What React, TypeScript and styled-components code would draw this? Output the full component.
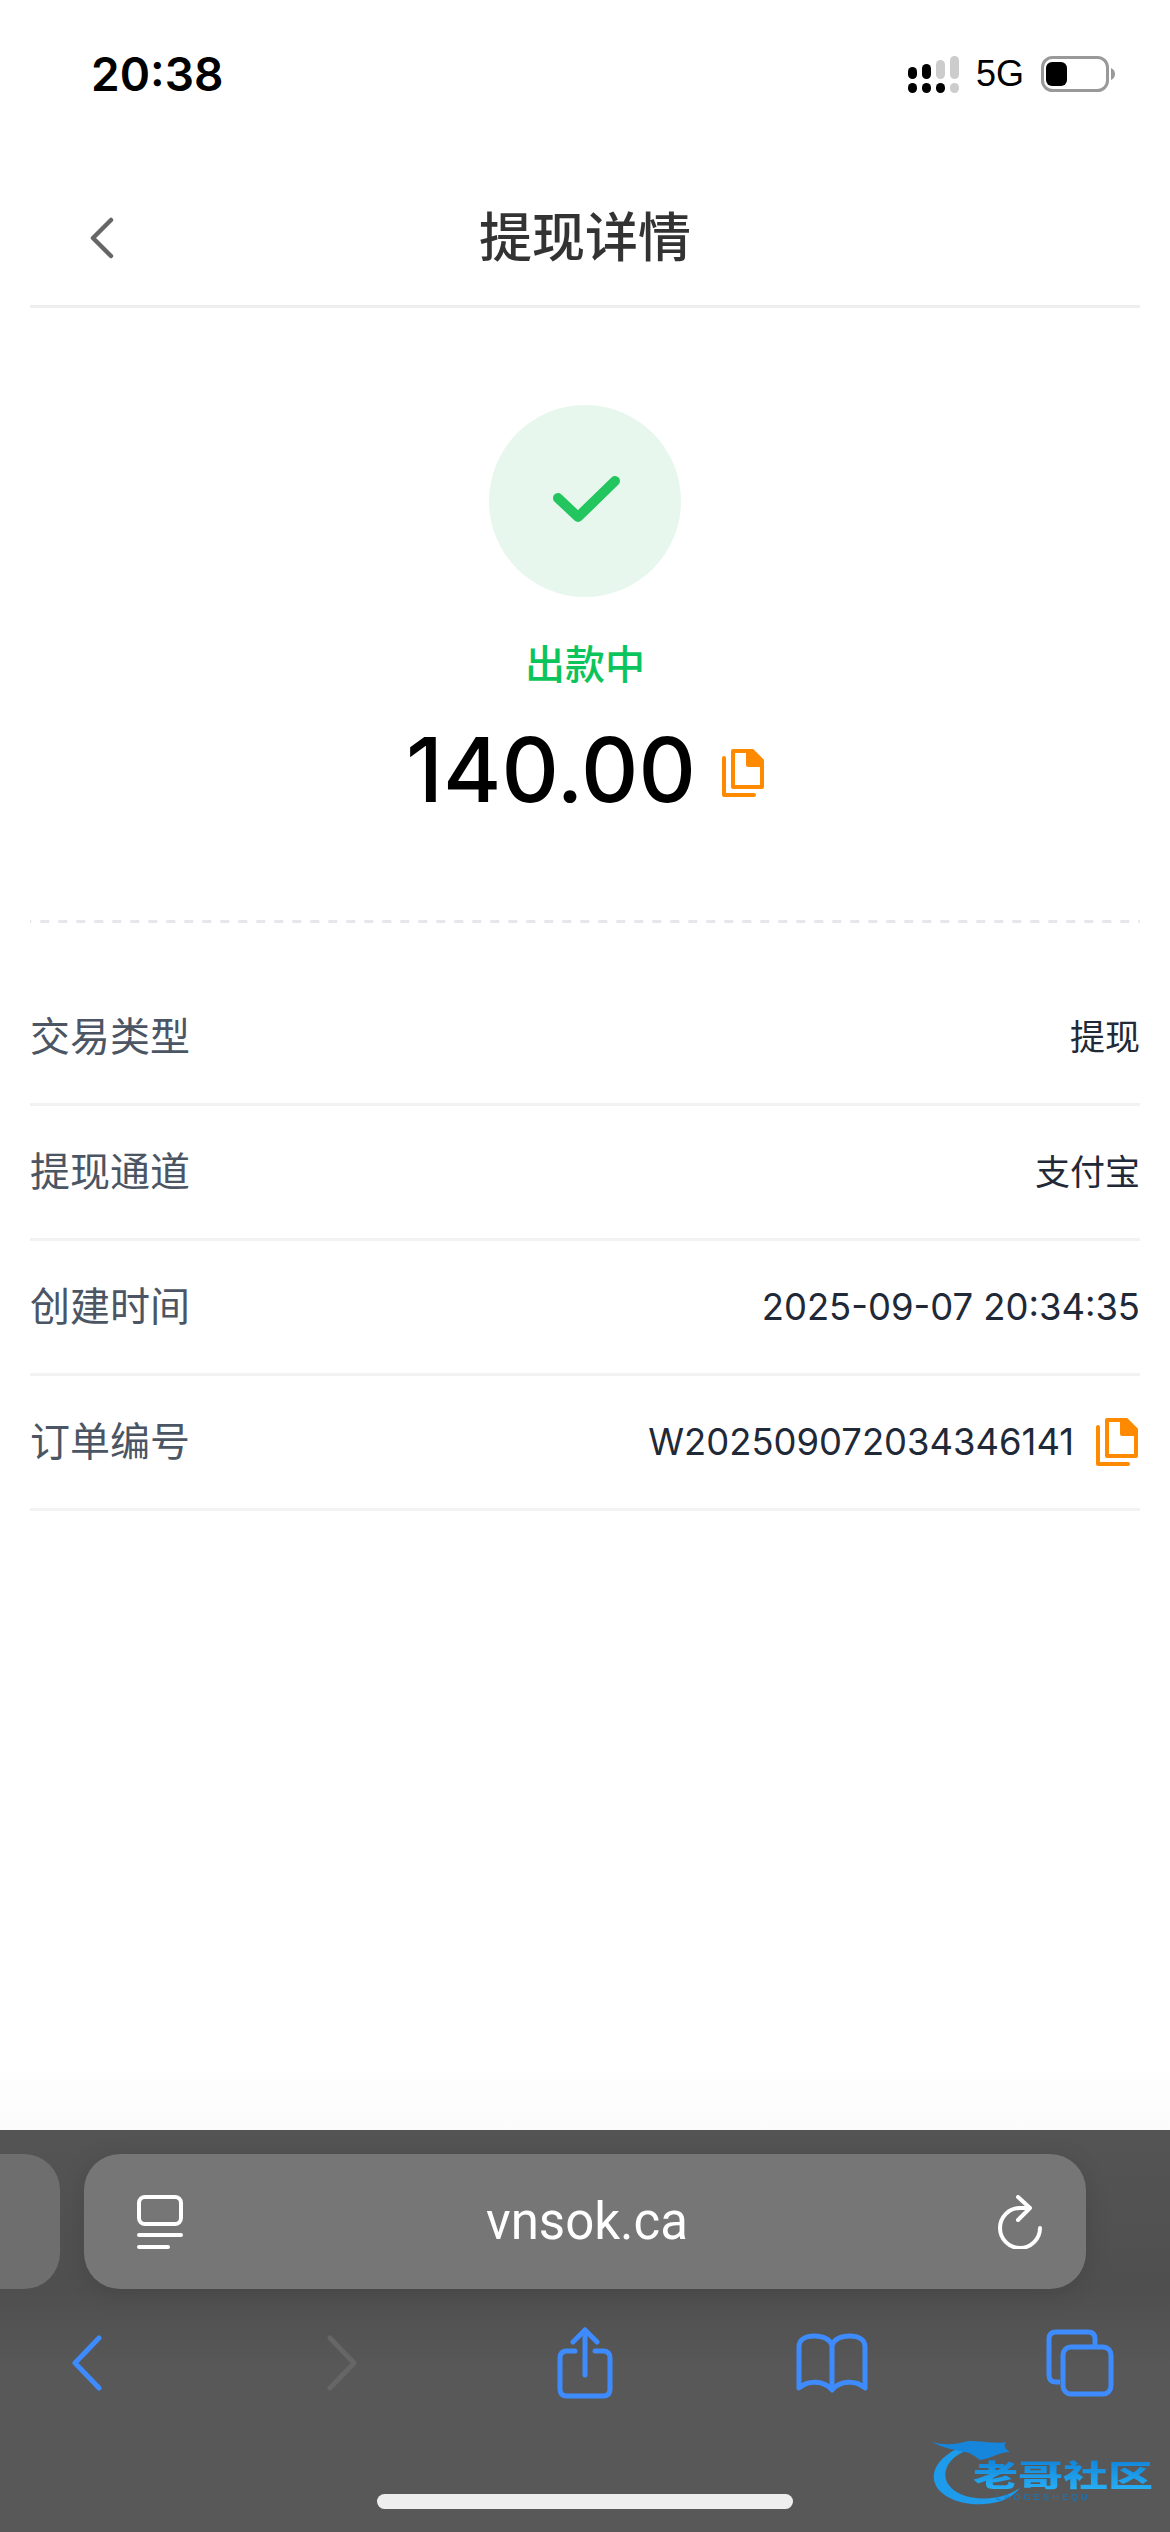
import React from "react";
import styled, { createGlobalStyle } from "styled-components";

const CJK = `Inter, "Noto Sans CJK SC", sans-serif`;

const GlobalStyle = createGlobalStyle`
  html, body {
    margin: 0;
    padding: 0;
    background: #fff;
  }
  * {
    box-sizing: border-box;
  }
`;

const Screen = styled.div`
  position: relative;
  width: 1170px;
  height: 2532px;
  display: flex;
  flex-direction: column;
  overflow: hidden;
  font-family: ${CJK};
  background: #fff;
`;

const StatusBar = styled.div`
  height: 148px;
  flex: none;
  display: flex;
  justify-content: space-between;
  padding: 50px 55px 0 91px;
`;

const Clock = styled.div`
  font: 600 46px/48px Inter, sans-serif;
  color: #000;
`;

const StatusIcons = styled.div`
  height: 48px;
  display: flex;
  align-items: center;
  gap: 17px;
`;

const NetworkLabel = styled.span`
  font: 400 36px/48px "Liberation Sans", sans-serif;
  color: #000;
`;

const Header = styled.header`
  position: relative;
  height: 160px;
  flex: none;
  margin: 0 30px;
  display: flex;
  align-items: center;
  justify-content: center;
  border-bottom: 3px solid #eeeeee;
`;

const BackButton = styled.div`
  position: absolute;
  left: 60px;
  top: 69px;
  display: flex;
`;

const Title = styled.h1`
  margin: 14px 0 0;
  font: 500 53px/64px "Noto Sans CJK SC", sans-serif;
  color: #333;
`;

const Main = styled.main`
  flex: 1;
  padding: 0 30px;
  background: linear-gradient(#fff 96%, #fbfbfb);
`;

const Hero = styled.section`
  height: 615px;
  padding-top: 97px;
  display: flex;
  flex-direction: column;
  align-items: center;
  background: linear-gradient(90deg, #e5e7eb 9px, transparent 9px) 10.3px 100% / 18px 3px repeat-x;
`;

const StatusCircle = styled.div`
  width: 192px;
  height: 192px;
  border-radius: 50%;
  background: #e8f7ee;
  display: flex;
  align-items: center;
  justify-content: center;
`;

const CheckMark = styled.svg`
  margin-left: 3px;
`;

const StatusText = styled.div`
  margin-top: 41px;
  font: 500 40px/48px "Noto Sans CJK SC", sans-serif;
  color: #0cc45c;
`;

const AmountRow = styled.div`
  margin-top: 30px;
  display: flex;
  align-items: center;
  gap: 26px;
`;

const Amount = styled.div`
  font: 500 89px/108px Inter, sans-serif;
  color: #000;
`;

const CopyButton = styled.div<{ $nudge?: number }>`
  display: flex;
  margin-top: ${(p) => p.$nudge ?? 0}px;
`;

const InfoList = styled.section`
  padding-top: 48px;
`;

const InfoRow = styled.div`
  height: 135px;
  display: flex;
  align-items: center;
  justify-content: space-between;
  border-bottom: 3px solid #f2f2f2;
`;

const Label = styled.span`
  font: 400 40px/48px ${CJK};
  color: #4b5563;
`;

const ValueGroup = styled.div`
  display: flex;
  align-items: center;
  gap: 22px;
  margin-right: 2px;
`;

const Value = styled.span<{ $numeric?: boolean }>`
  font: 400 ${(p) => (p.$numeric ? "36.4px" : "35px")}/48px ${CJK};
  color: #1f2937;
`;

const Toolbar = styled.footer`
  height: 402px;
  flex: none;
  padding-top: 24px;
  background: linear-gradient(#545454, #4f4f4f 40%, #585858 60%);
`;

const TabRow = styled.div`
  display: flex;
  gap: 24px;
  height: 135px;
`;

const TabStub = styled.div`
  width: 60px;
  border-radius: 0 36px 36px 0;
  background: #6e6e6e;
`;

const AddressBar = styled.div`
  width: 1002px;
  padding: 0 43px 0 53px;
  border-radius: 36px;
  background: #767676;
  box-shadow: 0 4px 24px rgba(0, 0, 0, 0.12);
  display: flex;
  align-items: center;
  justify-content: space-between;
`;

const Url = styled.span`
  font: 400 51px/60px Roboto, sans-serif;
  color: #fff;
  margin-right: 6px;
`;

const NavRow = styled.div`
  height: 72px;
  margin-top: 38px;
  padding: 0 40px 0 37px;
  display: flex;
  align-items: center;
  justify-content: space-between;
`;

const NavButton = styled.div<{ $inset?: number }>`
  width: 100px;
  padding-left: ${(p) => p.$inset ?? 0}px;
  display: flex;
  justify-content: center;
`;

const HomeBar = styled.div`
  width: 416px;
  height: 15px;
  margin: 95px auto 0;
  border-radius: 8px;
  background: #eeeeee;
`;

const Watermark = styled.div`
  position: absolute;
  left: 932px;
  top: 2438px;
  width: 222px;
  height: 68px;
  filter: blur(0.7px);
`;

const WatermarkArc = styled.svg`
  position: absolute;
  left: 0;
  top: 0;
`;

const WatermarkTitle = styled.div`
  position: absolute;
  left: 41px;
  top: 10px;
  font: 900 45px/50px "Noto Sans CJK SC", sans-serif;
  white-space: nowrap;
  transform: scaleY(0.66);
  background: linear-gradient(#0f7fd6, #27aef5);
  -webkit-background-clip: text;
  background-clip: text;
  color: transparent;
`;

const WatermarkSub = styled.div`
  position: absolute;
  left: 64px;
  top: 54px;
  font: 400 9px/10px "Liberation Sans", sans-serif;
  letter-spacing: 3.2px;
  color: #1278c4;
`;

function SignalIcon() {
  return (
    <svg width="51" height="37" viewBox="0 0 51 37">
      <g fill="#000">
        <rect x="0" y="11" width="9" height="12" rx="4.5" />
        <rect x="14" y="8" width="9" height="15" rx="4.5" />
        <rect x="0" y="27" width="9" height="10" rx="4.5" />
        <rect x="14" y="27" width="9" height="10" rx="4.5" />
        <rect x="28" y="27" width="9" height="10" rx="4.5" />
      </g>
      <g fill="#cccccc">
        <rect x="28" y="4" width="9" height="19" rx="4.5" />
        <rect x="42" y="0" width="9" height="23" rx="4.5" />
        <rect x="42" y="27" width="9" height="10" rx="4.5" />
      </g>
    </svg>
  );
}

function BatteryIcon() {
  return (
    <svg width="74" height="36" viewBox="0 0 74 36">
      <rect x="1.5" y="1.5" width="65" height="33" rx="10" fill="none" stroke="#999" strokeWidth="3" />
      <rect x="5" y="6" width="21" height="24" rx="6" fill="#000" />
      <path d="M70 12 q4 2 4 6 t-4 6z" fill="#999" />
    </svg>
  );
}

function CopyIcon() {
  return (
    <svg width="42" height="48" viewBox="0 0 42 48" fill="none">
      <path d="M2 9V46H32" stroke="#ff8a00" strokeWidth="4" strokeLinecap="round" strokeLinejoin="round" />
      <path d="M11 2H30L40 12V38H11Z" stroke="#ff8a00" strokeWidth="4" strokeLinejoin="round" />
      <path d="M24 0H31L42 11V18H26Q24 18 24 16Z" fill="#ff8a00" />
    </svg>
  );
}

function PageIcon() {
  return (
    <svg width="46" height="54" viewBox="0 0 46 54" fill="none" stroke="#fff" strokeWidth="4" strokeLinecap="round">
      <rect x="2" y="2" width="42" height="27" rx="6" />
      <path d="M2 40H44" />
      <path d="M2 52H31" />
    </svg>
  );
}

function ReloadIcon() {
  return (
    <svg width="46" height="54" viewBox="0 0 46 54" fill="none" stroke="#fff" strokeWidth="4" strokeLinecap="round" strokeLinejoin="round">
      <path d="M43 33A20 20 0 1 1 23 13H32" />
      <path d="M21 2L33 13L21 25" />
    </svg>
  );
}

const BLUE = "#3d8bfd";

export default function App() {
  return (
    <>
      <GlobalStyle />
      <Screen lang="zh-CN">
        <StatusBar>
          <Clock>20:38</Clock>
          <StatusIcons>
            <SignalIcon />
            <NetworkLabel>5G</NetworkLabel>
            <BatteryIcon />
          </StatusIcons>
        </StatusBar>
        <Header>
          <BackButton>
            <svg width="24" height="42" viewBox="0 0 24 42" fill="none" stroke="#666" strokeWidth="4.5" strokeLinecap="round" strokeLinejoin="round">
              <path d="M21 3L3 21L21 39" />
            </svg>
          </BackButton>
          <Title>提现详情</Title>
        </Header>
        <Main>
          <Hero>
            <StatusCircle>
              <CheckMark width="70" height="50" viewBox="0 0 70 50" fill="none" stroke="#23c55e" strokeWidth="10" strokeLinecap="round" strokeLinejoin="round">
                <path d="M6 22L26 41L63 5" />
              </CheckMark>
            </StatusCircle>
            <StatusText>出款中</StatusText>
            <AmountRow>
              <Amount>140.00</Amount>
              <CopyButton $nudge={6}>
                <CopyIcon />
              </CopyButton>
            </AmountRow>
          </Hero>
          <InfoList>
            <InfoRow>
              <Label>交易类型</Label>
              <Value>提现</Value>
            </InfoRow>
            <InfoRow>
              <Label>提现通道</Label>
              <Value>支付宝</Value>
            </InfoRow>
            <InfoRow>
              <Label>创建时间</Label>
              <Value $numeric>2025-09-07 20:34:35</Value>
            </InfoRow>
            <InfoRow>
              <Label>订单编号</Label>
              <ValueGroup>
                <Value $numeric>W202509072034346141</Value>
                <CopyButton>
                  <CopyIcon />
                </CopyButton>
              </ValueGroup>
            </InfoRow>
          </InfoList>
        </Main>
        <Toolbar>
          <TabRow>
            <TabStub />
            <AddressBar>
              <PageIcon />
              <Url>vnsok.ca</Url>
              <ReloadIcon />
            </AddressBar>
          </TabRow>
          <NavRow>
            <NavButton>
              <svg width="30" height="56" viewBox="0 0 30 56" fill="none" stroke={BLUE} strokeWidth="5" strokeLinecap="round" strokeLinejoin="round">
                <path d="M27 3L3 28L27 53" />
              </svg>
            </NavButton>
            <NavButton $inset={14}>
              <svg width="30" height="56" viewBox="0 0 30 56" fill="none" stroke="#666" strokeWidth="5" strokeLinecap="round" strokeLinejoin="round">
                <path d="M3 3L27 28L3 53" />
              </svg>
            </NavButton>
            <NavButton $inset={2}>
              <svg width="56" height="72" viewBox="0 0 56 72" fill="none" stroke={BLUE} strokeWidth="5" strokeLinecap="round" strokeLinejoin="round">
                <path d="M18 24H10Q3 24 3 31V62Q3 69 10 69H46Q53 69 53 62V31Q53 24 46 24H38" />
                <path d="M28 48V3" />
                <path d="M16 15L28 3L40 15" />
              </svg>
            </NavButton>
            <NavButton>
              <svg width="72" height="60" viewBox="0 0 72 60" fill="none" stroke={BLUE} strokeWidth="5" strokeLinecap="round" strokeLinejoin="round">
                <path d="M36 12V56" />
                <path d="M36 12C33 5 26 3 18 3C10 3 3 6 3 14V55C12 47 28 47 36 57C44 47 60 47 69 55V14C69 6 62 3 54 3C46 3 39 5 36 12Z" />
              </svg>
            </NavButton>
            <NavButton>
              <svg width="68" height="68" viewBox="0 0 68 68" fill="none" stroke={BLUE} strokeWidth="5" strokeLinejoin="round">
                <path d="M14 53H10Q3 53 3 46V10Q3 3 10 3H42Q49 3 49 10V17" />
                <rect x="17" y="18" width="48" height="47" rx="8" />
              </svg>
            </NavButton>
          </NavRow>
          <HomeBar />
        </Toolbar>
        <Watermark>
          <WatermarkArc width="222" height="68" viewBox="0 0 222 68" fill="none">
            <path d="M32 8C10 16 0 30 2 42C5 58 28 68 52 66C68 65 80 60 88 50C76 58 60 62 44 60C24 58 10 46 14 32C16 24 24 16 36 12Z" fill="#1e9bea" />
            <path d="M0 4C14 8 26 6 36 3C50 3 66 6 74 4C70 10 76 12 78 14C66 14 62 20 48 22C42 18 38 14 32 14C24 12 10 10 0 4Z" fill="#1586dc" />
          </WatermarkArc>
          <WatermarkTitle>老哥社区</WatermarkTitle>
          <WatermarkSub>LAOGESHEQU</WatermarkSub>
        </Watermark>
      </Screen>
    </>
  );
}
